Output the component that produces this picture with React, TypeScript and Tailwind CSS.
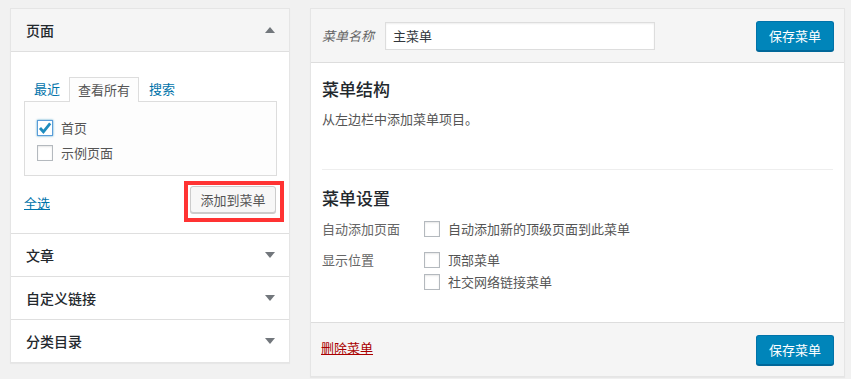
import React from "react";

const font = { fontFamily: '"Noto Sans CJK SC", "Noto Sans", sans-serif' };

function Box({ checked = false }: { checked?: boolean }) {
  return (
    <span
      className={
        "relative inline-block w-[16px] h-[16px] shrink-0 bg-white border " +
        (checked ? "border-[#5b9dd9] shadow-[0_0_2px_rgba(30,140,190,0.8)]" : "border-[#b4b9be] shadow-[inset_0_1px_2px_rgba(0,0,0,0.1)]")
      }
    >
      {checked && (
        <svg viewBox="0 0 16 16" className="absolute left-[-1px] top-[-1px] w-[16px] h-[16px]">
          <path d="M3 8 L6.4 11.8 L13.2 3.4" fill="none" stroke="#1e8cbe" strokeWidth="2.8" strokeLinecap="butt" strokeLinejoin="miter" />
        </svg>
      )}
    </span>
  );
}

function Tri({ up = false }: { up?: boolean }) {
  return (
    <svg width="10" height="6" viewBox="0 0 10 6">
      {up ? <path d="M0 6 L5 0 L10 6 Z" fill="#72777c" /> : <path d="M0 0 L10 0 L5 6 Z" fill="#72777c" />}
    </svg>
  );
}

function Section({ title, last = false }: { title: string; last?: boolean }) {
  return (
    <div
      className={
        "flex items-center justify-between pl-[15px] pr-[14px] bg-white " +
        (last ? "h-[42px]" : "h-[43px] border-b border-[#dfdfdf]")
      }
    >
      <span className="text-[14px] font-medium text-[#23282d] leading-[20px]">{title}</span>
      <Tri />
    </div>
  );
}

export default function App() {
  return (
    <div className="w-[851px] h-[379px] bg-[#f1f1f1] pt-[8px] pl-[10px] flex gap-[20px] items-start overflow-hidden" style={font}>
      {/* Left panel */}
      <div className="w-[280px] bg-white border border-[#e5e5e5] shadow-[0_1px_1px_rgba(0,0,0,0.04)]">
        <div className="h-[43px] bg-[#f5f5f5] border-b border-[#dfdfdf] flex items-center justify-between pl-[15px] pr-[14px]">
          <span className="text-[14px] font-medium text-[#23282d] leading-[20px]">页面</span>
          <Tri up />
        </div>
        <div className="h-[182px] border-b border-[#dfdfdf] pt-[24px] pl-[13px] pr-[12px]">
          <div className="flex h-[25px] items-stretch text-[13px] leading-[20px]">
            <div className="pl-[10px] pr-[9px] flex items-center text-[#0073aa]">最近</div>
            <div className="px-[8px] flex items-center text-[#555] bg-[#fdfdfd] border border-b-0 border-[#dddddd] relative top-[1px] z-10">
              查看所有
            </div>
            <div className="pl-[10px] flex items-center text-[#0073aa]">搜索</div>
          </div>
          <div className="h-[75px] border border-[#dddddd] bg-[#fdfdfd] pt-[18px] pl-[12px]">
            <div className="flex items-center gap-[8px] h-[16px] text-[13px] text-[#555]">
              <Box checked />
              <span>首页</span>
            </div>
            <div className="flex items-center gap-[8px] h-[16px] mt-[9px] text-[13px] text-[#555]">
              <Box />
              <span>示例页面</span>
            </div>
          </div>
          <div className="mt-[5px] flex items-center justify-between">
            <a className="text-[13px] text-[#0073aa] underline leading-[20px] mt-[2px]">全选</a>
            <div className="w-[100px] h-[41px] border-[4px] border-[#f33] mr-[-7px] pl-[2px] pt-[1px]">
              <div className="w-[86px] h-[27px] bg-[#f7f7f7] border border-[#cccccc] rounded-[3px] shadow-[0_1px_0_#cccccc] flex items-center justify-center text-[13px] text-[#555]">
                添加到菜单
              </div>
            </div>
          </div>
        </div>
        <Section title="文章" />
        <Section title="自定义链接" />
        <Section title="分类目录" last />
      </div>

      {/* Right panel */}
      <div className="w-[535px] bg-white border border-[#e5e5e5] shadow-[0_1px_1px_rgba(0,0,0,0.04)]">
        <div className="h-[54px] bg-[#f5f5f5] border-b border-[#dddddd] flex items-center pl-[11px] pr-[10px]">
          <span className="w-[63px] text-[13px] italic text-[#666] leading-[20px]">菜单名称</span>
          <div className="w-[270px] h-[28px] bg-white border border-[#dddddd] shadow-[inset_0_1px_2px_rgba(0,0,0,0.07)] flex items-center pl-[7px] text-[13px] text-[#32373c]">
            主菜单
          </div>
          <div className="ml-auto w-[78px] h-[30px] bg-[#0085ba] border border-[#0073aa] border-b-[#006799] rounded-[3px] shadow-[0_1px_0_#006799] flex items-center justify-center text-[13px] text-white">
            保存菜单
          </div>
        </div>
        <div className="h-[259px] pt-[14px] px-[11px]">
          <div className="text-[17px] leading-[24px] font-medium text-[#23282d]">菜单结构</div>
          <div className="mt-[8px] text-[13px] leading-[20px] text-[#555]">从左边栏中添加菜单项目。</div>
          <div className="mt-[40px] border-t border-[#eeeeee]" />
          <div className="mt-[16px] text-[17px] leading-[24px] font-medium text-[#23282d]">菜单设置</div>
          <div className="mt-[8px] flex text-[13px] text-[#666]">
            <div className="w-[102px] h-[22px] flex items-center">自动添加页面</div>
            <div className="h-[22px] flex items-center gap-[8px] text-[#555]">
              <Box />
              <span>自动添加新的顶级页面到此菜单</span>
            </div>
          </div>
          <div className="mt-[9px] flex text-[13px] text-[#666]">
            <div className="w-[102px] h-[22px] flex items-center">显示位置</div>
            <div className="flex flex-col text-[#555]">
              <div className="h-[22px] flex items-center gap-[8px]">
                <Box />
                <span>顶部菜单</span>
              </div>
              <div className="h-[22px] flex items-center gap-[8px]">
                <Box />
                <span>社交网络链接菜单</span>
              </div>
            </div>
          </div>
        </div>
        <div className="h-[54px] bg-[#f5f5f5] border-t border-[#dddddd] flex items-center pl-[10px] pr-[10px]">
          <a className="text-[13px] text-[#a00] underline decoration-[#a00] leading-[20px] mt-[-4px]">删除菜单</a>
          <div className="ml-auto w-[78px] h-[30px] bg-[#0085ba] border border-[#0073aa] border-b-[#006799] rounded-[3px] shadow-[0_1px_0_#006799] flex items-center justify-center text-[13px] text-white">
            保存菜单
          </div>
        </div>
      </div>
    </div>
  );
}
